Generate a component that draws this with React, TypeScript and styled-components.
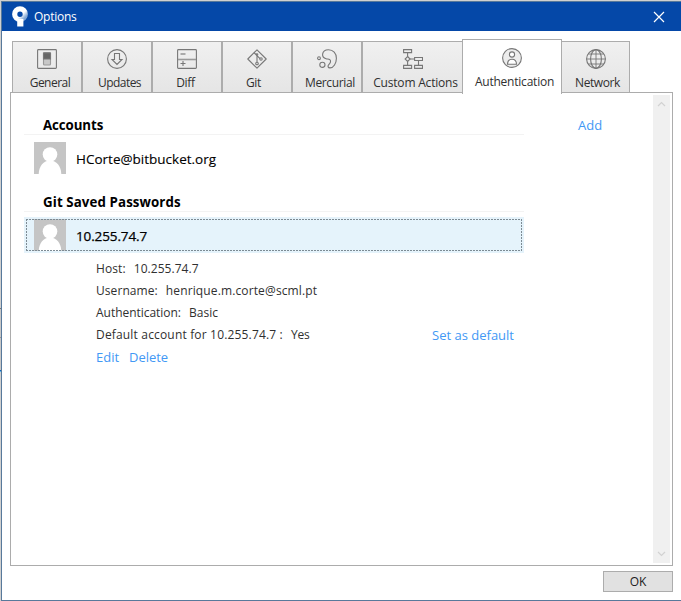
import React from 'react';
import styled, { createGlobalStyle, css } from 'styled-components';

const GlobalStyle = createGlobalStyle`
  * { box-sizing: border-box; }
  html, body { margin: 0; padding: 0; overflow: hidden; background: #fff; }
  body { font-family: 'Open Sans', 'Noto Sans', sans-serif; font-size: 12px; color: #303030; }
  svg { display: block; }
`;

const Desktop = styled.div`
  width: 681px;
  height: 601px;
  padding: 1px 0 0 1px;
  background: linear-gradient(
    #d0d0d0 308px, #777 308px, #777 309px, #c8c8c8 309px, #c8c8c8 337px, #999 337px, #999 338px,
    #c8c8c8 338px, #c8c8c8 370px, #1464b8 370px, #1464b8 371px, #58b4e8 371px, #58b4e8 372px, #d0d0d0 372px
  );
`;

const Window = styled.main`
  width: 680px;
  height: 600px;
  display: flex;
  flex-direction: column;
  background: #fff;
  border: 1px solid #58799b;
  border-right: 0;
`;

const TitleBar = styled.header`
  flex: none;
  height: 29px;
  display: flex;
  align-items: center;
  padding: 0 16px 0 9px;
  background: #0548a8;
  color: #fff;
`;

const Label = styled.span<{ $spacing?: number }>`
  white-space: pre;
  letter-spacing: ${({ $spacing = 0 }) => $spacing}px;
`;

const TitleText = styled(Label)`
  flex: 1;
  margin-left: 6px;
  line-height: 20px;
`;

const IconButton = styled.button`
  border: 0;
  padding: 0;
  background: none;
`;

const TabStrip = styled.nav`
  flex: none;
  height: 62px;
  display: flex;
  align-items: flex-end;
  padding-left: 10px;
`;

const Tab = styled.div<{ $width: number; $active?: boolean }>`
  width: ${({ $width }) => $width}px;
  height: 52px;
  padding-top: 7px;
  display: flex;
  flex-direction: column;
  align-items: center;
  border: 1px solid #acacac;
  border-bottom: 0;
  background: linear-gradient(#f0f0f0, #e5e5e5);
  line-height: 18px;
  svg { margin-bottom: 5px; }
  ${({ $active }) => $active && css`
    position: relative;
    height: 55px;
    margin: 0 -1px -1px;
    padding-top: 8px;
    background: #fff;
  `}
`;

const TabLabel = styled(Label)<{ $shift: number }>`
  margin-left: ${({ $shift }) => $shift * 2}px;
`;

const Panel = styled.section`
  flex: none;
  width: 663px;
  height: 474px;
  margin-left: 8px;
  margin-top: -1px;
  display: flex;
  border: 1px solid #acacac;
  padding: 2px 2px 3px 13px;
`;

const Accounts = styled.div`
  width: 500px;
`;

const SideActions = styled.div`
  flex: 1;
  padding: 20px 0 0 54px;
`;

const Heading = styled.h2<{ $height: number }>`
  margin: 0 0 5px;
  height: ${({ $height }) => $height}px;
  display: flex;
  align-items: flex-end;
  padding-left: 19px;
  border-bottom: 1px solid #f3f3f3;
  font-size: 13.3px;
  line-height: 18px;
  color: #000;
`;

const AccountRow = styled.div<{ $selected?: boolean }>`
  height: 36px;
  padding: 2px;
  background: ${({ $selected }) => ($selected ? '#e5f3fb' : 'transparent')};
`;

const dashes = (angle: number) =>
  `repeating-linear-gradient(${angle}deg, #7d8b94 0 2px, transparent 2px 3px)`;

const AccountInner = styled.div<{ $selected?: boolean }>`
  position: relative;
  width: 496px;
  height: 32px;
  padding-left: 8px;
  display: flex;
  align-items: center;
  gap: 10px;
  font-size: 13.5px;
  color: #000;
  -webkit-text-stroke: ${({ $selected }) => ($selected ? 0.25 : 0.12)}px #000;
  ${({ $selected }) => $selected && css`
    &::after {
      content: '';
      position: absolute;
      inset: 0;
      background:
        ${dashes(90)} top / 100% 1px no-repeat,
        ${dashes(90)} bottom / 100% 1px no-repeat,
        ${dashes(180)} left / 1px 100% no-repeat,
        ${dashes(180)} right / 1px 100% no-repeat;
    }
  `}
`;

const AccountName = styled(Label)`
  padding-top: 2px;
`;

const Details = styled.div`
  padding: 5px 0 0 72px;
`;

const DetailRow = styled.div`
  height: 22px;
  display: flex;
  align-items: center;
  line-height: 20px;
`;

const DetailValue = styled(Label)`
  margin-left: 8px;
`;

const Link = styled.a<{ $spacing?: number }>`
  color: #4298f5;
  font-size: 13px;
  line-height: 20px;
  white-space: nowrap;
  letter-spacing: ${({ $spacing = 0 }) => $spacing}px;
`;

const DefaultLink = styled(Link)`
  margin-left: auto;
  margin-right: 10px;
`;

const LinkRow = styled(DetailRow)`
  gap: 10px;
`;

const ScrollBar = styled.div`
  width: 17px;
  height: 468px;
  display: flex;
  flex-direction: column;
  justify-content: space-between;
  align-items: center;
  padding: 6px 0;
  background: #f0f0f0;
`;

const Footer = styled.footer`
  display: flex;
  justify-content: flex-end;
  padding: 5px 8px 0 0;
`;

const OkButton = styled.button`
  width: 70px;
  height: 21px;
  padding: 0;
  border: 1px solid #acacac;
  background: #e1e1e1;
  font: inherit;
  line-height: 19px;
  color: #202020;
`;

const Avatar = () => (
  <svg width="32" height="32" viewBox="0 0 32 32">
    <path fill="#c5c5c5" d="M0 0h32v32H0z" />
    <circle cx="16" cy="12.5" r="7.3" fill="#fff" />
    <path d="M4.7 32C5 24 9.5 18.5 16 18.5S27 24 27.3 32z" fill="#fff" />
  </svg>
);

const Chevron = ({ down = false }: { down?: boolean }) => (
  <svg width="9" height="6" viewBox="0 0 9 6" fill="none" stroke="#d2d2d2" strokeWidth="1.2">
    <path d={down ? 'M1 1l3.5 3.5L8 1' : 'M1 5l3.5-3.5L8 5'} />
  </svg>
);

const Logo = () => (
  <svg width="17" height="21" viewBox="0 0 17 21">
    <defs>
      <linearGradient id="ring" x1="0" y1="0" x2="1" y2="1">
        <stop offset=".6" stopColor="#fff" />
        <stop offset=".9" stopColor="#83a7d5" />
      </linearGradient>
    </defs>
    <circle cx="9" cy="8.200" r="5.300" fill="none" stroke="url(#ring)" strokeWidth="5.200" />
    <path d="M6.200 13h6.200v7.500H6.200z" fill="#fff" />
  </svg>
);

const icons: Record<string, React.ReactNode> = {
  General: (
    <>
      <rect x=".6" y=".6" width="18.800" height="18.800" rx=".8" />
      <rect x="6.500" y="3.500" width="7" height="12.500" rx="1" fill="#c8c8c8" stroke="#999" />
      <path d="M6.500 4h7v6h-7z" fill="#666" stroke="#777" />
    </>
  ),
  Updates: (
    <>
      <circle cx="10" cy="10" r="9.400" />
      <path d="M7.500 4.500h5v6h2.500l-5 5-5-5h2.500z" />
    </>
  ),
  Diff: (
    <>
      <rect x=".6" y=".6" width="18.800" height="18.800" rx=".8" />
      <path d="M1 10.500h18" strokeWidth="1.600" stroke="#999" />
      <path d="M3.500 5h5" strokeWidth="1.600" stroke="#999" />
      <path d="M3.500 14.500h5M6 12v5" />
    </>
  ),
  Git: (
    <>
      <path d="M10 .8l9.200 9.200-9.200 9.200L.8 10z" strokeLinejoin="round" />
      <path d="M7 3.500l3 3.200V13M10 6.700l3 3" />
      <circle cx="10" cy="5.500" r=".8" />
      <circle cx="14" cy="10" r="1.200" />
      <circle cx="10" cy="14.500" r="1.300" />
    </>
  ),
  Mercurial: (
    <>
      <path d="M5.600 5.200C6 2.300 8.500.7 11.500.7c4.700 0 7.900 3.700 7.900 8.500 0 5-2.900 9.700-6.400 9.700-2.200 0-2.500-1.900-1.200-3.300 1.800-1.900 2.400-3.900 1-5-1-.8-2.300-.5-3.700-.9-2.200-.6-3.700-2.300-3.500-4.500z" />
      <circle cx="2" cy="9.200" r="1.400" />
      <circle cx="5.400" cy="15.800" r="2.600" />
    </>
  ),
  'Custom Actions': (
    <>
      <path d="M.6.6h8v3h-8zM.6 16.400h8v3h-8zM11.600 8.500h7.900v3h-7.900zM11.600 16.400h7.900v3h-7.900zM4.600 3.600v4M4.600 12.300v4M7 10h4.600M15.500 11.500v4.900" />
      <path d="M4.600 7.500L7.100 10l-2.500 2.500L2.100 10z" fill="#ededed" />
    </>
  ),
  Authentication: (
    <>
      <circle cx="10" cy="10" r="9.400" fill="#ececec" />
      <circle cx="10" cy="6.500" r="2.600" fill="#fff" />
      <path d="M5.500 16.300c0-3.300 1.800-5.100 4.500-5.100s4.500 1.800 4.500 5.100z" fill="#fff" />
    </>
  ),
  Network: (
    <>
      <circle cx="10" cy="10" r="9.400" />
      <ellipse cx="10" cy="10" rx="5.400" ry="9.400" />
      <path d="M2.500 5h15M.6 10h18.800M2.500 15h15M10 .6v18.800" strokeWidth=".9" />
    </>
  ),
};

const TabIcon = ({ name }: { name: string }) => (
  <svg width="20" height="20" viewBox="0 0 20 20" fill="none" stroke="#777" strokeWidth="1.100">
    {icons[name]}
  </svg>
);

const tabs = [
  { name: 'General', width: 70, spacing: -0.5, shift: 3 },
  { name: 'Updates', width: 70, spacing: -0.55, shift: 2.5 },
  { name: 'Diff', width: 70, spacing: -0.3, shift: -1.5 },
  { name: 'Git', width: 70, spacing: -0.3, shift: -3.5 },
  { name: 'Mercurial', width: 70, spacing: -0.35, shift: 3 },
  { name: 'Custom Actions', width: 101, spacing: -0.2, shift: 3 },
  { name: 'Authentication', width: 100, spacing: -0.22, shift: 2.5, active: true },
  { name: 'Network', width: 69, spacing: -0.4, shift: 2 },
];

const details = [
  { label: 'Host:', value: '10.255.74.7', labelSpacing: 0.1, spacing: 0.05 },
  { label: 'Username:', value: 'henrique.m.corte@scml.pt', labelSpacing: 0.07, spacing: 0.13 },
  { label: 'Authentication:', value: 'Basic', labelSpacing: -0.03, spacing: 0 },
  {
    label: 'Default account for 10.255.74.7 :',
    value: 'Yes',
    labelSpacing: 0.17,
    spacing: -0.2,
    action: 'Set as default',
  },
];

export default function App() {
  return (
    <>
      <GlobalStyle />
      <Desktop>
        <Window>
          <TitleBar>
            <Logo />
            <TitleText $spacing={-0.25}>Options</TitleText>
            <IconButton aria-label="Close">
              <svg width="12" height="12" viewBox="0 0 12 12" stroke="#fff" strokeWidth="1.200">
                <path d="M1 1l10 10M11 1L1 11" />
              </svg>
            </IconButton>
          </TitleBar>
          <TabStrip>
            {tabs.map((t) => (
              <Tab key={t.name} $width={t.width} $active={t.active}>
                <TabIcon name={t.name} />
                <TabLabel $spacing={t.spacing} $shift={t.shift}>{t.name}</TabLabel>
              </Tab>
            ))}
          </TabStrip>
          <Panel>
            <Accounts>
              <Heading $height={40}><Label $spacing={-0.1}>Accounts</Label></Heading>
              <AccountRow>
                <AccountInner>
                  <Avatar />
                  <AccountName>HCorte@bitbucket.org</AccountName>
                </AccountInner>
              </AccountRow>
              <Heading $height={36}><Label $spacing={0.1}>Git Saved Passwords</Label></Heading>
              <AccountRow $selected>
                <AccountInner $selected>
                  <Avatar />
                  <AccountName $spacing={-0.12}>10.255.74.7</AccountName>
                </AccountInner>
              </AccountRow>
              <Details>
                {details.map((d) => (
                  <DetailRow key={d.label}>
                    <Label $spacing={d.labelSpacing}>{d.label}</Label>
                    <DetailValue $spacing={d.spacing}>{d.value}</DetailValue>
                    {d.action && <DefaultLink>{d.action}</DefaultLink>}
                  </DetailRow>
                ))}
                <LinkRow>
                  <Link>Edit</Link>
                  <Link $spacing={-0.05}>Delete</Link>
                </LinkRow>
              </Details>
            </Accounts>
            <SideActions><Link>Add</Link></SideActions>
            <ScrollBar>
              <Chevron />
              <Chevron down />
            </ScrollBar>
          </Panel>
          <Footer><OkButton>OK</OkButton></Footer>
        </Window>
      </Desktop>
    </>
  );
}
